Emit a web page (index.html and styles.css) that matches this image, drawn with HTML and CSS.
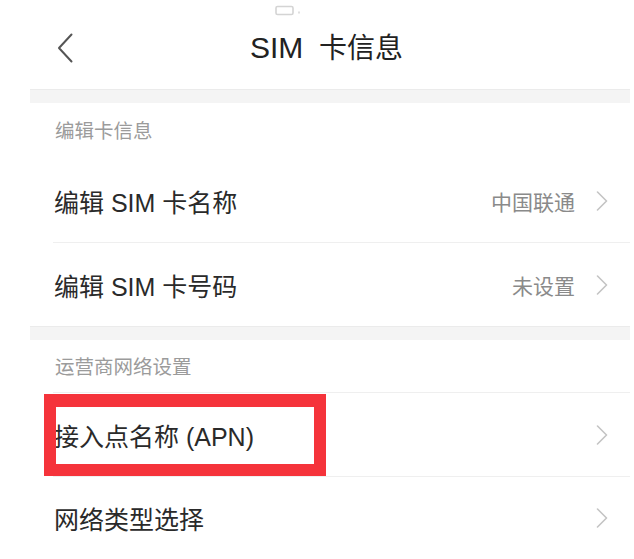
FILE: index.html
```html
<!DOCTYPE html>
<html lang="zh-CN">
<head>
<meta charset="utf-8">
<title>SIM 卡信息</title>
<link rel="stylesheet" href="styles.css">
</head>
<body>
<div class="status">
  <svg class="status-icon" width="26" height="12" viewBox="0 0 26 12">
    <rect x="1" y="1.5" width="17" height="8" rx="1.5" fill="none" stroke="#d4d4d4" stroke-width="1.6"/>
    <rect x="23" y="6.5" width="2" height="2" fill="#e0e0e0"/>
  </svg>
</div>
<div class="header">
  <svg class="back" width="16" height="30" viewBox="0 0 16 30">
    <path d="M14.5 1.5 L2 15 L14.5 28.5" fill="none" stroke="#555" stroke-width="2" stroke-linecap="round" stroke-linejoin="round"/>
  </svg>
  <div class="title"><span class="title-latin">SIM</span>&nbsp;&nbsp;卡信息</div>
</div>
<div class="content">
  <div class="band"></div>
  <div class="group">
    <div class="section-title">编辑卡信息</div>
    <div class="row divided">
      <span class="label">编辑 SIM 卡名称</span>
      <span class="value">中国联通</span>
      <svg class="chev" width="12" height="20" viewBox="0 0 12 20"><path d="M1.5 1 L10.5 10 L1.5 19" fill="none" stroke="#c4c4c4" stroke-width="1.6" stroke-linecap="round" stroke-linejoin="round"/></svg>
    </div>
    <div class="row tall">
      <span class="label">编辑 SIM 卡号码</span>
      <span class="value">未设置</span>
      <svg class="chev" width="12" height="20" viewBox="0 0 12 20"><path d="M1.5 1 L10.5 10 L1.5 19" fill="none" stroke="#c4c4c4" stroke-width="1.6" stroke-linecap="round" stroke-linejoin="round"/></svg>
    </div>
  </div>
  <div class="band"></div>
  <div class="group">
    <div class="section-title short divided">运营商网络设置</div>
    <div class="row tall divided highlight">
      <span class="label">接入点名称 (APN)</span>
      <span class="value"></span>
      <svg class="chev" width="12" height="20" viewBox="0 0 12 20"><path d="M1.5 1 L10.5 10 L1.5 19" fill="none" stroke="#c4c4c4" stroke-width="1.6" stroke-linecap="round" stroke-linejoin="round"/></svg>
      <div class="mark"></div>
    </div>
    <div class="row">
      <span class="label">网络类型选择</span>
      <span class="value"></span>
      <svg class="chev" width="12" height="20" viewBox="0 0 12 20"><path d="M1.5 1 L10.5 10 L1.5 19" fill="none" stroke="#c4c4c4" stroke-width="1.6" stroke-linecap="round" stroke-linejoin="round"/></svg>
    </div>
  </div>
</div>
</body>
</html>
```

FILE: styles.css
```css
html, body {
  margin: 0;
  padding: 0;
  background: #ffffff;
}
body {
  width: 634px;
  height: 559px;
  overflow: hidden;
  font-family: "Liberation Sans", "Noto Sans CJK SC", sans-serif;
  color: #333333;
}
.status {
  height: 22px;
  box-sizing: border-box;
  padding: 5px 0 0 275px;
  display: flex;
}
.status-icon {
  display: block;
}
.header {
  height: 67px;
  box-sizing: border-box;
  padding: 11px 0 0 57px;
  display: flex;
  align-items: flex-start;
}
.back {
  display: block;
}
.title {
  margin-left: 177px;
  font-size: 28px;
  line-height: 30px;
  color: #222222;
  white-space: nowrap;
}
.title-latin {
  font-size: 30px;
}
.content {
  margin-left: 30px;
  width: 600px;
}
.band {
  height: 14px;
  box-sizing: border-box;
  background: #f4f4f4;
  border-top: 1px solid #ebebeb;
}
.group {
  margin-left: 23px;
}
.section-title {
  height: 57px;
  line-height: 57px;
  padding-left: 2px;
  font-size: 19.5px;
  color: #9b9b9b;
}
.section-title.short {
  height: 52px;
  line-height: 54px;
}
.divided {
  border-bottom: 1px solid #efefef;
}
.row {
  height: 82px;
  display: flex;
  align-items: center;
  padding: 0 22px 0 1px;
  position: relative;
}
.row.tall {
  height: 83px;
}
.label {
  flex: 1;
  font-size: 25px;
  color: #2a2a2a;
  white-space: nowrap;
}
.value {
  font-size: 21px;
  color: #8a8a8a;
  margin-right: 21px;
}
.chev {
  display: block;
}
.mark {
  position: absolute;
  left: -9px;
  top: 1px;
  width: 282px;
  height: 82px;
  box-sizing: border-box;
  border: 12px solid #f5333b;
  border-top-width: 13px;
}
```
